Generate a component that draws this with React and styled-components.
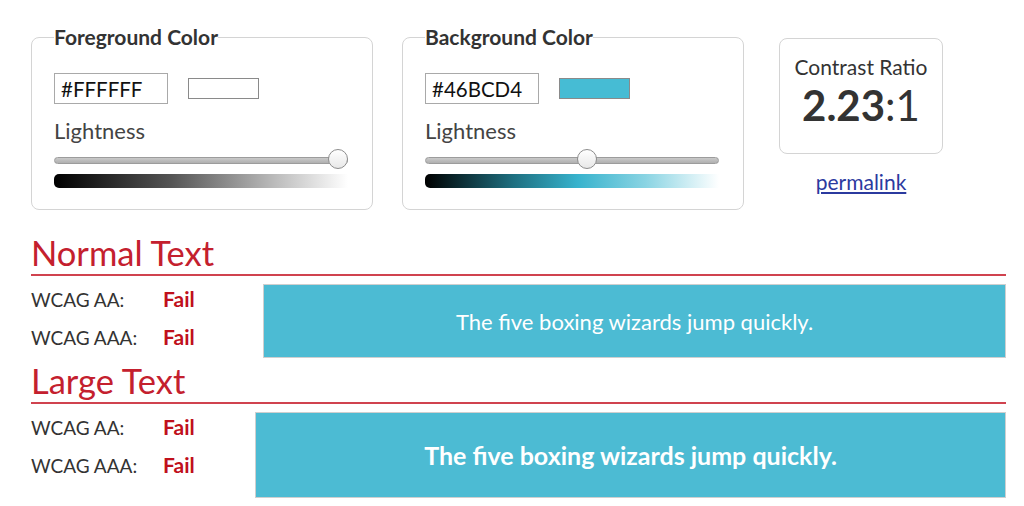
import React from 'react'
import styled, { createGlobalStyle } from 'styled-components'

const GlobalStyle = createGlobalStyle`
  body {
    margin: 0;
    background: #fff;
    font-family: Lato, "Open Sans", sans-serif;
    color: #333;
  }
`

const Page = styled.div`
  width: 1024px;
  height: 506px;
  box-sizing: border-box;
  padding: 25px 18px 0 31px;
  overflow: hidden;
`

const Top = styled.div`
  display: flex;
  align-items: flex-start;
`

const Panel = styled.fieldset`
  width: 342px;
  height: 185px;
  box-sizing: border-box;
  margin: 0 ${({gap}) => gap}px 0 0;
  padding: 0 24px 0 22px;
  border: 1px solid #d4d4d4;
  border-radius: 8px;
`

const Legend = styled.legend`
  padding: 0;
  font-size: 21px;
  font-weight: 700;
  color: #333;
  line-height: 24px;
`

const InputRow = styled.div`
  display: flex;
  align-items: center;
  margin-top: 24px;
`

const HexInput = styled.input`
  width: 114px;
  height: 31px;
  box-sizing: border-box;
  border: 1px solid #a9a9a9;
  padding: 0 6px;
  font-family: inherit;
  font-size: 20.5px;
  color: #111;
`

const Swatch = styled.div`
  width: 71px;
  height: 21px;
  box-sizing: border-box;
  margin-left: 20px;
  border: 1px solid #8a8a8a;
  background: ${({color}) => color};
`

const Label = styled.div`
  margin-top: 14px;
  font-size: 22px;
  color: #444;
  line-height: 26px;
`

const Track = styled.div`
  position: relative;
  margin-top: 13px;
  height: 5px;
  border: 1px solid #9c9c9c;
  border-radius: 4px;
  background: linear-gradient(#c9c9c9, #b0b0b0);
`

const Thumb = styled.div`
  position: absolute;
  top: -9px;
  width: 20px;
  height: 20px;
  margin-left: -10px;
  box-sizing: border-box;
  border: 1px solid #8d8d8d;
  border-radius: 50%;
  background: linear-gradient(#ffffff, #e8e8e8);
`

const Ramp = styled.div`
  margin-top: 10px;
  height: 14px;
  border-radius: 5px 0 0 5px;
  background: ${({ramp}) => ramp};
`

const RatioCol = styled.div`
  display: flex;
  flex-direction: column;
  align-items: center;
  margin-top: 13px;
`

const RatioBox = styled.div`
  width: 164px;
  height: 116px;
  box-sizing: border-box;
  border: 1px solid #d4d4d4;
  border-radius: 8px;
  text-align: center;
  padding-top: 15px;
`

const RatioTitle = styled.div`
  font-size: 21px;
  color: #333;
  line-height: 26px;
`

const RatioValue = styled.div`
  font-size: 42px;
  line-height: 50px;
  color: #333;
  b { font-weight: 700; }
`

const Permalink = styled.a`
  margin-top: 15px;
  font-size: 21px;
  color: #2b3a9f;
  text-decoration: underline;
`

const Heading = styled.h2`
  margin: ${({top}) => top}px 0 0;
  padding-bottom: 2px;
  border-bottom: 2px solid #d0434f;
  font-size: 34.5px;
  font-weight: 400;
  color: #c4202e;
  line-height: 38px;
`

const Result = styled.div`
  display: flex;
  margin-top: 8px;
`

const Labels = styled.div`
  width: ${({w}) => w}px;
  display: grid;
  grid-template-columns: 132px auto;
  row-gap: 15px;
  align-content: start;
  align-items: baseline;
  padding-top: 4px;
  font-size: 19px;
  line-height: 22px;
`

const Level = styled.span`
  color: #333;
`

const Verdict = styled.span`
  font-size: 21px;
  font-weight: 700;
  color: #c0101c;
`

const Sample = styled.div`
  flex: 1;
  height: ${({h}) => h}px;
  box-sizing: border-box;
  display: flex;
  align-items: center;
  justify-content: center;
  border: 1px solid #cfcfcf;
  background: #4cbbd3;
  color: #fff;
  font-size: ${({large}) => (large ? 25 : 22)}px;
  font-weight: ${({large}) => (large ? 700 : 400)};
`

const ColorPanel = ({title, hex, color, pos, ramp, gap}) => (
  <Panel gap={gap}>
    <Legend>{title}</Legend>
    <InputRow>
      <HexInput defaultValue={hex} />
      <Swatch color={color} />
    </InputRow>
    <Label>Lightness</Label>
    <Track>
      <Thumb style={{left: `${pos}%`}} />
    </Track>
    <Ramp ramp={ramp} />
  </Panel>
)

const Section = ({title, top, labelWidth, h, large}) => (
  <>
    <Heading top={top}>{title}</Heading>
    <Result>
      <Labels w={labelWidth}>
        <Level>WCAG AA:</Level>
        <Verdict>Fail</Verdict>
        <Level>WCAG AAA:</Level>
        <Verdict>Fail</Verdict>
      </Labels>
      <Sample h={h} large={large}>The five boxing wizards jump quickly.</Sample>
    </Result>
  </>
)

const App = () => {
  return (
    <Page>
      <GlobalStyle />
      <Top>
        <ColorPanel
          title="Foreground Color"
          hex="#FFFFFF"
          color="#ffffff"
          pos={97}
          gap={29}
          ramp="linear-gradient(to right, #000 0%, #555 40%, #bbb 75%, #fff 100%)"
        />
        <ColorPanel
          title="Background Color"
          hex="#46BCD4"
          color="#46bcd4"
          pos={55}
          gap={35}
          ramp="linear-gradient(to right, #000 0%, #1e6f80 30%, #38b3cd 52%, #8ad4e3 75%, #fff 100%)"
        />
        <RatioCol>
          <RatioBox>
            <RatioTitle>Contrast Ratio</RatioTitle>
            <RatioValue><b>2.23</b>:1</RatioValue>
          </RatioBox>
          <Permalink href="#">permalink</Permalink>
        </RatioCol>
      </Top>
      <Section title="Normal Text" top={24} labelWidth={232} h={74} />
      <Section title="Large Text" top={4} labelWidth={224} h={86} large />
    </Page>
  )
}

export default App
